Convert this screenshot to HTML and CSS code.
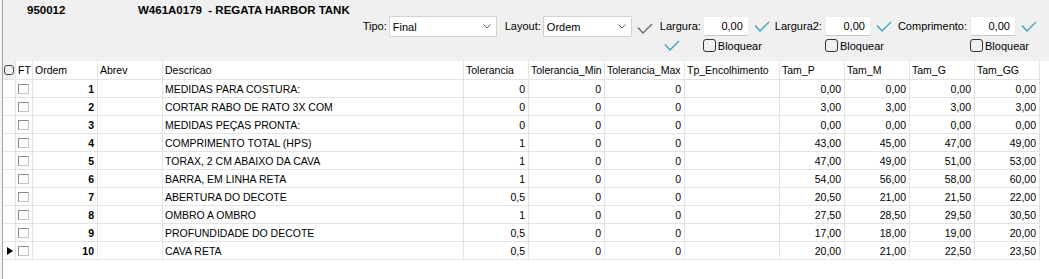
FILE: index.html
```html
<!DOCTYPE html>
<html lang="pt">
<head>
    <meta charset="UTF-8">
    <title>Medidas</title>
    <link rel="stylesheet" href="styles.css">
</head>
<body>
    <div class="app">
        <div class="toolbar">
            <div class="title">
                <span class="code">950012</span>
                <span>W461A0179&nbsp; - REGATA HARBOR TANK</span>
            </div>
            <div class="controls">
                <span class="lbl">Tipo:</span>
                <div class="combo combo-tipo">
                    <span>Final</span>
                    <svg width="8" height="5" viewBox="0 0 8 5"><path d="M0.5 0.5 L4 4 L7.5 0.5" fill="none" stroke="#5f5f5f" stroke-width="1"/></svg>
                </div>
                <span class="lbl lbl-layout">Layout:</span>
                <div class="combo combo-layout">
                    <span>Ordem</span>
                    <svg width="8" height="5" viewBox="0 0 8 5"><path d="M0.5 0.5 L4 4 L7.5 0.5" fill="none" stroke="#5f5f5f" stroke-width="1"/></svg>
                </div>
                <svg class="tick tick-gray" width="16" height="11" viewBox="0 0 16 11"><path d="M1 4.5 L6 10 L15 1" fill="none" stroke="#6a6a6a" stroke-width="1.4"/></svg>

                <div class="field lbl-largura">
                    <span class="lbl">Largura:</span>
                    <svg class="tick tick-under" width="16" height="11" viewBox="0 0 16 11"><path d="M1 4.5 L6 10 L15 1" fill="none" stroke="#3aa6c2" stroke-width="1.4"/></svg>
                </div>
                <div class="field input">
                    <div class="text">0,00</div>
                    <label class="lock"><span class="box"></span>Bloquear</label>
                </div>
                <svg class="tick" width="16" height="11" viewBox="0 0 16 11"><path d="M1 4.5 L6 10 L15 1" fill="none" stroke="#3aa6c2" stroke-width="1.4"/></svg>

                <span class="lbl lbl-next">Largura2:</span>
                <div class="field input">
                    <div class="text">0,00</div>
                    <label class="lock"><span class="box"></span>Bloquear</label>
                </div>
                <svg class="tick" width="16" height="11" viewBox="0 0 16 11"><path d="M1 4.5 L6 10 L15 1" fill="none" stroke="#3aa6c2" stroke-width="1.4"/></svg>

                <span class="lbl lbl-next lbl-comp">Comprimento:</span>
                <div class="field input">
                    <div class="text">0,00</div>
                    <label class="lock"><span class="box"></span>Bloquear</label>
                </div>
                <svg class="tick" width="16" height="11" viewBox="0 0 16 11"><path d="M1 4.5 L6 10 L15 1" fill="none" stroke="#3aa6c2" stroke-width="1.4"/></svg>
            </div>
        </div>

        <table class="grid">
            <colgroup>
                <col style="width:13px">
                <col style="width:17px">
                <col style="width:65px">
                <col style="width:65px">
                <col style="width:301px">
                <col style="width:65px">
                <col style="width:76px">
                <col style="width:80px">
                <col style="width:95px">
                <col style="width:65px">
                <col style="width:65px">
                <col style="width:65px">
                <col style="width:65px">
            </colgroup>
            <thead>
                <tr>
                    <th class="sel"><span class="round"></span></th>
                    <th>FT</th>
                    <th>Ordem</th>
                    <th>Abrev</th>
                    <th>Descricao</th>
                    <th>Tolerancia</th>
                    <th>Tolerancia_Min</th>
                    <th>Tolerancia_Max</th>
                    <th>Tp_Encolhimento</th>
                    <th>Tam_P</th>
                    <th>Tam_M</th>
                    <th>Tam_G</th>
                    <th>Tam_GG</th>
                </tr>
            </thead>
            <tbody id="rows"></tbody>
        </table>
    </div>

    <script>
        const medidas = [
            ['MEDIDAS PARA COSTURA:', '0', ['0,00', '0,00', '0,00', '0,00']],
            ['CORTAR RABO DE RATO 3X COM', '0', ['3,00', '3,00', '3,00', '3,00']],
            ['MEDIDAS PEÇAS PRONTA:', '0', ['0,00', '0,00', '0,00', '0,00']],
            ['COMPRIMENTO TOTAL (HPS)', '1', ['43,00', '45,00', '47,00', '49,00']],
            ['TORAX, 2 CM ABAIXO DA CAVA', '1', ['47,00', '49,00', '51,00', '53,00']],
            ['BARRA, EM LINHA RETA', '1', ['54,00', '56,00', '58,00', '60,00']],
            ['ABERTURA DO DECOTE', '0,5', ['20,50', '21,00', '21,50', '22,00']],
            ['OMBRO A OMBRO', '1', ['27,50', '28,50', '29,50', '30,50']],
            ['PROFUNDIDADE DO DECOTE', '0,5', ['17,00', '18,00', '19,00', '20,00']],
            ['CAVA RETA', '0,5', ['20,00', '21,00', '22,50', '23,50']]
        ];

        const tbody = document.getElementById('rows');
        medidas.forEach(function (m, i) {
            const current = i === medidas.length - 1;
            let html = '<td class="sel">' + (current ? '<span class="arrow"></span>' : '') + '</td>';
            html += '<td><span class="check"></span></td>';
            html += '<td class="num ord">' + (i + 1) + '</td>';
            html += '<td></td>';
            html += '<td>' + m[0] + '</td>';
            html += '<td class="num">' + m[1] + '</td>';
            html += '<td class="num">0</td><td class="num">0</td><td></td>';
            m[2].forEach(function (t) {
                html += '<td class="num">' + t + '</td>';
            });
            const tr = document.createElement('tr');
            tr.innerHTML = html;
            tbody.appendChild(tr);
        });
    </script>
</body>
</html>
```

FILE: styles.css
```css
* {
    box-sizing: border-box;
}
body {
    margin: 0;
    background-color: #f3f3f3;
    font-family: "Liberation Sans", Arial, sans-serif;
    color: #000;
}
.app {
    margin-left: 2px;
    border-left: 1px solid #a5a5a5;
    height: 279px;
    background-color: #fff;
    overflow: hidden;
}
.toolbar {
    height: 61px;
    background-color: #f0f0f0;
}
.title {
    display: flex;
    height: 16px;
    padding: 3px 0 0 24px;
    font-size: 11.5px;
    font-weight: bold;
    line-height: 14px;
    white-space: nowrap;
}
.title .code {
    width: 111px;
}
.controls {
    display: flex;
    justify-content: flex-end;
    align-items: flex-start;
    padding-right: 12px;
    font-size: 11px;
}
.lbl {
    height: 20px;
    line-height: 20px;
    white-space: nowrap;
}
.lbl-layout {
    margin-left: 8px;
}
.lbl-next {
    margin-left: 5px;
}
.lbl-comp {
    margin-left: 6px;
}
.combo {
    display: flex;
    align-items: center;
    justify-content: space-between;
    height: 21px;
    margin-left: 2px;
    padding: 0 5px 0 3px;
    background-color: #fff;
    border: 1px solid #d2d2d2;
    border-radius: 1px;
}
.combo-tipo {
    width: 108px;
}
.combo-layout {
    width: 89px;
}
.tick {
    display: block;
    flex-shrink: 0;
    margin-top: 5px;
    margin-left: 5px;
}
.tick-gray {
    margin-top: 7px;
}
.tick-under {
    margin-top: 4px;
    margin-left: 4px;
}
.field {
    display: flex;
    flex-direction: column;
    margin-left: 3px;
}
.field.input {
    width: 46px;
}
.lbl-largura {
    margin-left: 7px;
}
.lbl-largura + .field {
    margin-left: 2px;
}
.text {
    width: 46px;
    height: 20px;
    padding-right: 5px;
    line-height: 18px;
    text-align: right;
    background-color: #fff;
    border: 1px solid #ececec;
    border-bottom-color: #c8c8c8;
}
.lock {
    display: flex;
    align-items: center;
    gap: 2px;
    height: 13px;
    margin-top: 3px;
    white-space: nowrap;
}
.box {
    flex-shrink: 0;
    width: 13px;
    height: 13px;
    border: 1px solid #333;
    border-radius: 3px;
}

.grid {
    border-collapse: separate;
    border-spacing: 0;
    table-layout: fixed;
    width: 1037px;
    font-size: 10.5px;
}
.grid th,
.grid td {
    padding: 0 3px 0 2px;
    border-right: 1px solid #e3e3e3;
    border-bottom: 1px solid #e3e3e3;
    font-weight: normal;
    text-align: left;
    white-space: nowrap;
    overflow: hidden;
}
.grid th {
    height: 19px;
}
.grid td {
    height: 18px;
}
.grid .sel {
    padding: 0 0 0 1px;
}
.grid th.sel {
    background-color: #f0f0f0;
}
.grid .num {
    text-align: right;
}
.grid .ord {
    font-weight: bold;
}
.round {
    display: block;
    width: 10px;
    height: 10px;
    border: 1px solid #444;
    border-radius: 3px;
}
.check {
    display: block;
    width: 11px;
    height: 10px;
    border: 1px solid #8c8c8c;
    border-right-color: #c4c4c4;
    border-bottom-color: #c4c4c4;
}
.arrow {
    display: block;
    width: 0;
    height: 0;
    margin-left: 3px;
    border-left: 6px solid #000;
    border-top: 4.5px solid transparent;
    border-bottom: 4.5px solid transparent;
}
```
